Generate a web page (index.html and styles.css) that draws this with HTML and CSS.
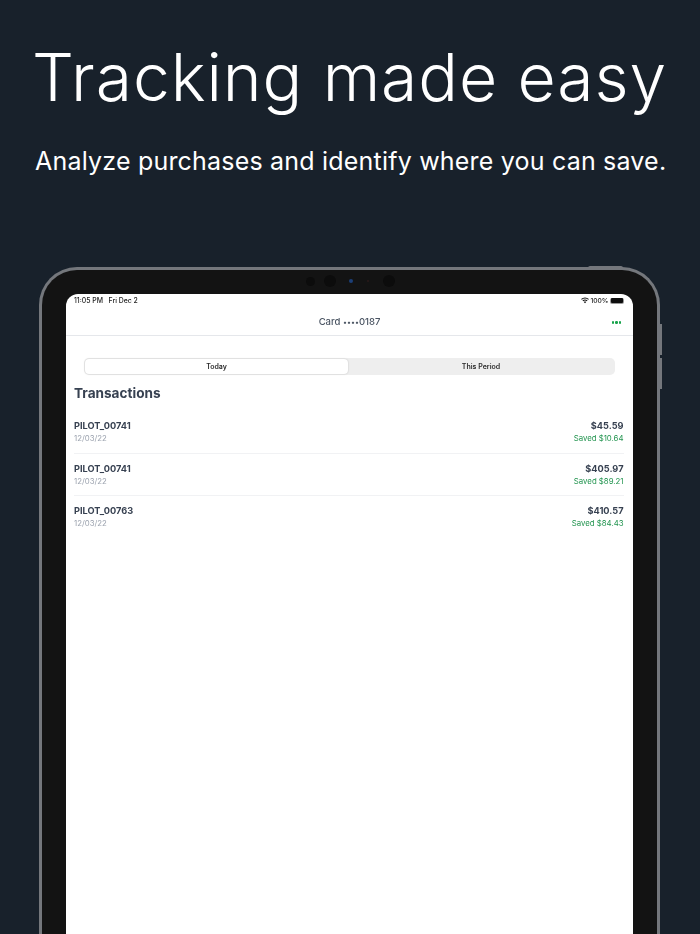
FILE: index.html
```html
<!DOCTYPE html>
<html lang="en">
<head>
<meta charset="utf-8">
<title>Tracking made easy</title>
<link rel="stylesheet" href="styles.css">
</head>
<body>
<div class="page">
  <header class="hero">
    <h1 class="headline">Tracking made easy</h1>
    <p class="subhead">Analyze purchases and identify where you can save.</p>
  </header>
  <div class="device">
    <span class="btn-top"></span>
    <span class="btn-side btn-vol-up"></span>
    <span class="btn-side btn-vol-down"></span>
    <div class="bezel">
      <div class="cameras">
        <span class="cam cam-a"></span>
        <span class="cam cam-b"></span>
        <span class="cam cam-c"></span>
        <span class="cam cam-d"></span>
        <span class="cam cam-e"></span>
      </div>
      <main class="screen">
        <div class="status">
          <span class="status-time">11:05 PM&nbsp;&nbsp; Fri Dec 2</span>
          <span class="status-right">
            <svg class="wifi" width="8" height="7" viewBox="0 0 18 14" aria-hidden="true">
              <path d="M1 4.600C3.200 2.500 6 1.300 9 1.300s5.800 1.200 8 3.300" fill="none" stroke="#111" stroke-width="2.300"/>
              <path d="M4.100 7.800C5.500 6.500 7.200 5.800 9 5.800s3.500.7 4.900 2" fill="none" stroke="#111" stroke-width="2.300"/>
              <path d="M6.400 10.300C7.100 9.700 8 9.400 9 9.400s1.900.3 2.600.9L9 13.200z" fill="#111"/>
            </svg>
            <span>100%</span>
            <span class="battery"><span class="battery-fill"></span></span>
          </span>
        </div>
        <nav class="navbar">
          <span class="nav-title">Card <span class="mask">••••</span>0187</span>
          <span class="nav-more"><i></i><i></i><i></i></span>
        </nav>
        <div class="tabs">
          <div class="tab tab-active">Today</div>
          <div class="tab">This Period</div>
        </div>
        <h2 class="section-title">Transactions</h2>
        <ul class="list">
          <li class="row">
            <div class="cell"><span class="name">PILOT_00741</span><span class="date">12/03/22</span></div>
            <div class="cell cell-end"><span class="name">$45.59</span><span class="saved">Saved $10.64</span></div>
          </li>
          <li class="row">
            <div class="cell"><span class="name">PILOT_00741</span><span class="date">12/03/22</span></div>
            <div class="cell cell-end"><span class="name">$405.97</span><span class="saved">Saved $89.21</span></div>
          </li>
          <li class="row">
            <div class="cell"><span class="name">PILOT_00763</span><span class="date">12/03/22</span></div>
            <div class="cell cell-end"><span class="name">$410.57</span><span class="saved">Saved $84.43</span></div>
          </li>
        </ul>
      </main>
    </div>
  </div>
</div>
</body>
</html>
```
FILE: styles.css
```css
* { box-sizing: border-box; }
html, body { margin: 0; padding: 0; }
body { background: #18212b; font-family: Inter, "Liberation Sans", sans-serif; }
.page { width: 700px; height: 934px; overflow: hidden; }

.hero { padding: 38px 0 0 32px; height: 267px; color: #fff; }
.headline { margin: 0; font-size: 66px; line-height: 78px; font-weight: 300; letter-spacing: 0.9px; white-space: nowrap; }
.subhead { margin: 28px 0 0 3px; font-size: 25px; line-height: 34px; font-weight: 400; letter-spacing: 0.2px; white-space: nowrap; }

.device { position: relative; width: 621px; height: 700px; margin-left: 39px; }
.bezel {
  height: 100%; padding: 24px 24px 0 24px;
  background: #131313; border: 3px solid #74777c; border-bottom: 0;
  border-radius: 38px 38px 0 0;
}
.btn-top { position: absolute; top: -1px; right: 37px; width: 35px; height: 3px; background: #74777c; border-radius: 2px 2px 0 0; }
.btn-side { position: absolute; right: -2px; width: 2px; background: #74777c; }
.btn-vol-up { top: 57px; height: 31px; }
.btn-vol-down { top: 91px; height: 31px; }

.cameras { position: absolute; top: 7px; left: 0; right: 0; height: 14px; }
.cam { position: absolute; border-radius: 50%; background: #0c0c0c; }
.cam-a { left: 267px; top: 3px; width: 9px; height: 9px; }
.cam-b { left: 285px; top: 1px; width: 12px; height: 12px; }
.cam-c { left: 310px; top: 5px; width: 4px; height: 4px; background: #1c3f78; }
.cam-d { left: 328px; top: 6px; width: 2px; height: 2px; background: #2a1a1a; }
.cam-e { left: 344px; top: 1px; width: 12px; height: 12px; }

.screen { height: 100%; background: #fff; border-radius: 12px 12px 0 0; color: #374151; filter: blur(0.3px); }

.status { display: flex; justify-content: space-between; align-items: center; height: 13px; padding: 0 9px 0 8px; font-size: 6.900px; font-weight: 500; color: #1b1b1b; }
.status-right { display: flex; align-items: center; gap: 1.500px; font-size: 6.700px; }
.battery { display: block; width: 14px; height: 6px; padding: 0.5px; border-radius: 2px; background: #999; }
.battery-fill { display: block; width: 12px; height: 100%; background: #0d0d0d; border-radius: 1px; }

.navbar { position: relative; display: flex; justify-content: center; align-items: center; height: 29px; padding-top: 1px; border-bottom: 1px solid #e5e7eb; }
.nav-title { font-size: 9.500px; font-weight: 500; color: #4b5563; }
.mask { font-size: 7.500px; }
.nav-more { position: absolute; right: 12px; top: 14px; display: flex; gap: 1px; }
.nav-more i { display: block; width: 2.500px; height: 2.500px; border-radius: 50%; background: #16a34a; }

.tabs { display: flex; height: 17px; margin: 22px 18px 0 18px; padding: 1px; background: #eeeeee; border-radius: 5px; }
.tab { flex: 1; display: flex; align-items: center; justify-content: center; font-size: 7px; font-weight: 600; color: #2b2b2b; border-radius: 4px; }
.tab-active { flex: none; width: 263px; background: #fff; box-shadow: 0 0 2px rgba(0,0,0,.2); }

.section-title { margin: 9px 0 0 8px; font-size: 13.600px; line-height: 18px; font-weight: 700; color: #374151; }

.list { list-style: none; margin: 9px 9.500px 0 8px; padding: 0; }
.row { display: flex; justify-content: space-between; height: 42.500px; padding-top: 9px; border-bottom: 1px solid #f1f2f4; }
.row:last-child { border-bottom: 0; }
.cell { display: flex; flex-direction: column; gap: 0; }
.cell-end { align-items: flex-end; }
.name { font-size: 9.200px; line-height: 12px; font-weight: 700; color: #374151; }
.date { font-size: 7.800px; line-height: 12px; color: #9ca3af; }
.saved { font-size: 7.800px; line-height: 12px; color: #22944f; }
```
